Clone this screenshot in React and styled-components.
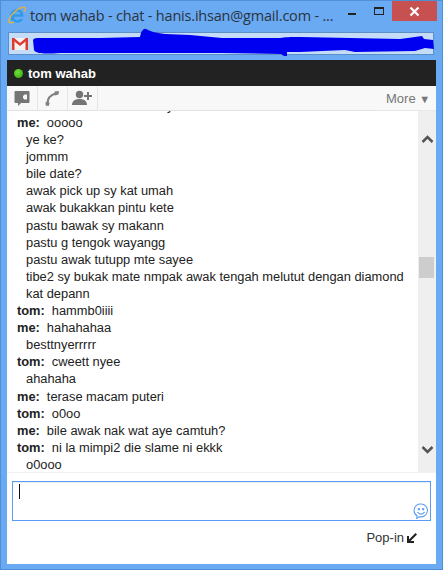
import styled, { createGlobalStyle } from "styled-components";

const Global = createGlobalStyle`
  html, body {
    margin: 0;
    padding: 0;
    background: #69aaf3;
  }
`;

const messages = [
  { who: "me", lines: ["ooooo", "ye ke?", "jommm", "bile date?", "awak pick up sy kat umah", "awak bukakkan pintu kete", "pastu bawak sy makann", "pastu g tengok wayangg", "pastu awak tutupp mte sayee", "tibe2 sy bukak mate nmpak awak tengah melutut dengan diamond kat depann"] },
  { who: "tom", lines: ["hammb0iiii"] },
  { who: "me", lines: ["hahahahaa", "besttnyerrrrr"] },
  { who: "tom", lines: ["cweett nyee", "ahahaha"] },
  { who: "me", lines: ["terase macam puteri"] },
  { who: "tom", lines: ["o0oo"] },
  { who: "me", lines: ["bile awak nak wat aye camtuh?"] },
  { who: "tom", lines: ["ni la mimpi2 die slame ni ekkk", "o0ooo"] },
];

export default function App() {
  return (
    <Window>
      <Global />
      <TitleBar>
        <IeIcon />
        <Title>tom wahab - chat - hanis.ihsan@gmail.com - ...</Title>
        <Controls>
          <MinButton />
          <MaxButton />
          <CloseButton>
            <svg width="11" height="11" viewBox="0 0 11 11">
              <path d="M1.500 1.500l8 8M9.500 1.500l-8 8" stroke="#fff" strokeWidth="2.200" />
            </svg>
          </CloseButton>
        </Controls>
      </TitleBar>
      <AddressBar>
        <GmailIcon />
        <Scribble />
      </AddressBar>
      <Panel>
        <ChatHeader>
          <StatusDot />
          <ChatName>tom wahab</ChatName>
        </ChatHeader>
        <Toolbar>
          <ToolButton $width={31}>
            <svg width="18" height="18" viewBox="0 0 18 18" fill="#757575">
              <path d="M2.500 2h13a1 1 0 0 1 1 1v10a1 1 0 0 1-1 1H8l-3 3v-3H2.500a1 1 0 0 1-1-1V3a1 1 0 0 1 1-1z" />
              <path d="M11.500 5.500h2.500v5h-2.500l-1.500-1.500v-2z" fill="#f8f8f8" />
            </svg>
          </ToolButton>
          <ToolButton $width={30}>
            <svg width="18" height="18" viewBox="0 0 18 18" fill="none">
              <path d="M3.500 14.500c0-4.500 3-8.500 8-10" stroke="#808080" strokeWidth="2" />
              <path d="M1.500 13l4.200.6-1 3.400-3-.5zM10.500 2.500l4.500-.5-.5 3.500-3.500 1z" fill="#808080" />
            </svg>
          </ToolButton>
          <ToolButton $width={30}>
            <svg width="21" height="18" viewBox="0 0 21 18" fill="#757575">
              <circle cx="7.500" cy="5.500" r="3.700" />
              <path d="M0 16c0-4 3-6 7.500-6s7.500 2 7.500 6z" />
              <path d="M15 3h2v3h3v2h-3v3h-2V8h-3V6h3z" />
            </svg>
          </ToolButton>
          <ToolSpacer />
          <MoreButton>More <Caret>▼</Caret></MoreButton>
        </Toolbar>
        <ChatBody>
          <MessageList>
            <ClippedLine>y</ClippedLine>
            {messages.map((m, i) => (
              <div key={i}>
                <FirstLine>
                  <Who>{m.who}:</Who>
                  <span>{m.lines[0]}</span>
                </FirstLine>
                {m.lines.slice(1).map((line, j) => (
                  <Line key={j}>{line}</Line>
                ))}
              </div>
            ))}
          </MessageList>
          <Scrollbar>
            <ScrollArrow $top={24}>
              <svg width="13" height="9" viewBox="0 0 13 9">
                <path d="M1.500 7l5-5 5 5" fill="none" stroke="#555" strokeWidth="2.500" />
              </svg>
            </ScrollArrow>
            <ScrollThumb />
            <ScrollArrow $top={334}>
              <svg width="13" height="9" viewBox="0 0 13 9">
                <path d="M1.500 2l5 5 5-5" fill="none" stroke="#555" strokeWidth="2.500" />
              </svg>
            </ScrollArrow>
          </Scrollbar>
        </ChatBody>
        <Composer>
          <TextCaret />
          <Smiley>
            <svg width="16" height="16" viewBox="0 0 15 15" fill="none" stroke="#5d9cf0" strokeWidth="1">
              <path d="M7.500 1a6 6 0 1 1-1.500 11.800L3.500 14.500 3.800 12A6 6 0 0 1 7.500 1z" />
              <circle cx="5.500" cy="5.800" r=".6" fill="#5d9cf0" />
              <circle cx="9.500" cy="5.800" r=".6" fill="#5d9cf0" />
              <path d="M4.200 8.500c1.500 2.600 5 2.600 6.600 0" />
            </svg>
          </Smiley>
        </Composer>
        <PopRow>
          Pop-in
          <svg width="12" height="12" viewBox="0 0 12 12">
            <path d="M1 4v7h7V9H4.500L11 2.500 9.500 1 3 7.500V4z" fill="#222" />
          </svg>
        </PopRow>
      </Panel>
    </Window>
  );
}

function IeIcon() {
  return (
    <IconSlot>
      <svg width="18" height="18" viewBox="0 0 18 18">
        <path
          d="M4.200 10.500h9.800c.4-3.800-2-6.500-5.300-6.500C5.500 4 3 6.500 3 9.800c0 3.300 2.500 5.700 5.700 5.700 2.300 0 4.200-1 5-3h-3c-.5.800-1.200 1.100-2 1.100-1.400 0-2.500-1-2.500-3.100zM5.200 8.500c.3-1.400 1.800-2.300 3.500-2.300 1.600 0 2.800.9 2.900 2.300z"
          fill="#2f9be8"
          fillRule="evenodd"
          transform="translate(-1.400 -1.900) scale(1.200)"
        />
        <path
          d="M6 15.800C3 17.200 1 17 .8 15.300.6 12.800 4 7 9.500 3.500 13 1.300 16.500.3 17.200 1.800c.4.900-.2 2.400-1.200 4"
          fill="none"
          stroke="#e8b23a"
          strokeWidth="1.300"
        />
      </svg>
    </IconSlot>
  );
}

function GmailIcon() {
  return (
    <svg width="16" height="12" viewBox="0 0 16 12">
      <rect width="16" height="12" fill="#f6f2f0" />
      <path d="M0 0h2.500v12H0zM13.500 0H16v12h-2.500z" fill="#dd3b32" />
      <path d="M1 .8L8 6.500 15 .8" fill="none" stroke="#dd3b32" strokeWidth="2.400" />
    </svg>
  );
}

function Scribble() {
  return (
    <ScribbleSvg viewBox="33 28 402 30" width="402" height="30">
      <path
        fill="#0000f0"
        d="M33 40C34 38 36 38 40 38L100 38L140 37C141 32 143 28 146 29C150 31 155 33 165 34L190 35L222 38L280 38C285 37 290 37 300 37L350 38L400 39C408 38 415 37 422 36L424 39L433 40L434 49L425 48L415 51L355 52L345 50L300 52L287 52L287 56L284 56L281 54L222 53L60 53C45 54 36 54 34 50Z"
      />
    </ScribbleSvg>
  );
}

const Window = styled.div`
  width: 443px;
  height: 570px;
  box-sizing: border-box;
  padding: 0 7px 6px;
  display: flex;
  flex-direction: column;
  background: #69aaf3;
  box-shadow: inset 0 0 0 1px #4e8fd6;
  overflow: hidden;
`;

const TitleBar = styled.div`
  height: 32px;
  flex: none;
  display: flex;
  align-items: center;
  margin-left: 1px;
`;

const IconSlot = styled.div`
  width: 22px;
  height: 18px;
  margin-top: -2px;
  flex: none;
`;

const Title = styled.div`
  flex: 1;
  margin-top: -1px;
  font: 14.5px "Open Sans", "Noto Sans", sans-serif;
  letter-spacing: -0.2px;
  color: #2b3440;
  white-space: nowrap;
`;

const Controls = styled.div`
  display: flex;
  align-items: flex-start;
  align-self: flex-start;
  flex: none;
  margin-right: -1px;
`;

const MinButton = styled.div`
  width: 8px;
  height: 2px;
  margin: 13px 18px 0 0;
  background: #222;
`;

const MaxButton = styled.div`
  width: 8px;
  height: 5px;
  margin: 7px 8px 0 0;
  border: 1px solid #222;
  border-top-width: 2px;
`;

const CloseButton = styled.div`
  width: 45px;
  height: 20px;
  margin-top: 1px;
  background: #c75050;
  display: flex;
  align-items: center;
  justify-content: center;
`;

const AddressBar = styled.div`
  position: relative;
  height: 23px;
  flex: none;
  margin: 0 2px 5px 1px;
  box-sizing: border-box;
  border: 1px solid #5d8fc7;
  background: #c5dcf8;
  display: flex;
  align-items: center;
  padding-left: 3px;
`;

const ScribbleSvg = styled.svg`
  position: absolute;
  left: 24px;
  top: -5px;
`;

const Panel = styled.div`
  flex: 1;
  display: flex;
  flex-direction: column;
  background: #fff;
  min-height: 0;
`;

const ChatHeader = styled.div`
  height: 26px;
  flex: none;
  display: flex;
  align-items: center;
  background: #222;
  padding-left: 7px;
`;

const StatusDot = styled.div`
  width: 9px;
  height: 9px;
  border-radius: 50%;
  background: radial-gradient(circle at 40% 35%, #6fe23a, #2f9c0a);
  margin-right: 5px;
`;

const ChatName = styled.div`
  font: bold 13px "Liberation Sans", Arial, sans-serif;
  color: #fff;
`;

const Toolbar = styled.div`
  height: 25px;
  flex: none;
  display: flex;
  background: #f8f8f8;
`;

const ToolButton = styled.div`
  width: ${(p) => p.$width}px;
  flex: none;
  display: flex;
  align-items: center;
  justify-content: center;
  border-right: 1px solid #e6e6e6;
  border-bottom: 1px solid #e2e2e2;
  box-sizing: border-box;
`;

const ToolSpacer = styled.div`
  flex: 1;
  margin-left: 1px;
  border-bottom: 1px solid #e2e2e2;
`;

const MoreButton = styled.div`
  width: 58px;
  flex: none;
  box-sizing: border-box;
  padding: 5px 0 0 8px;
  font: 13px/16px "Liberation Sans", Arial, sans-serif;
  color: #777;
  border-bottom: 1px solid #e8e8e8;
`;

const Caret = styled.span`
  font-size: 11px;
`;

const ChatBody = styled.div`
  height: 361px;
  flex: none;
  display: flex;
  overflow: hidden;
  border-bottom: 1px solid #f2f2f2;
`;

const MessageList = styled.div`
  flex: 1;
  min-width: 0;
  overflow: hidden;
  padding: 0 8px 0 10px;
  font: 12.85px/17.1px "Liberation Sans", Arial, sans-serif;
  color: #222;
`;

const ClippedLine = styled.div`
  margin: -14px 0 0 150px;
  height: 17px;
`;

const FirstLine = styled.div`
  display: flex;
  gap: 7px;
`;

const Who = styled.span`
  font-weight: bold;
`;

const Line = styled.div`
  padding-left: 9px;
`;

const Scrollbar = styled.div`
  position: relative;
  width: 18px;
  flex: none;
  background: #efefef;
`;

const ScrollArrow = styled.div`
  position: absolute;
  left: 3px;
  top: ${(p) => p.$top}px;
  line-height: 0;
`;

const ScrollThumb = styled.div`
  position: absolute;
  left: 1px;
  top: 146px;
  width: 15px;
  height: 21px;
  background: #cdcdcd;
`;

const Composer = styled.div`
  position: relative;
  height: 38px;
  flex: none;
  margin: 8px 5px 0 5px;
  border: 1px solid #5a9bf5;
  box-shadow: inset 0 1px 0 #eee;
`;

const TextCaret = styled.div`
  position: absolute;
  left: 6px;
  top: 2px;
  width: 1px;
  height: 15px;
  background: #111;
`;

const Smiley = styled.div`
  position: absolute;
  right: 1px;
  bottom: 1px;
  line-height: 0;
`;

const PopRow = styled.div`
  display: flex;
  justify-content: flex-end;
  align-items: center;
  gap: 2px;
  margin: 8px 18px 0 0;
  font: 13px/17px "Liberation Sans", Arial, sans-serif;
  color: #333;
`;
